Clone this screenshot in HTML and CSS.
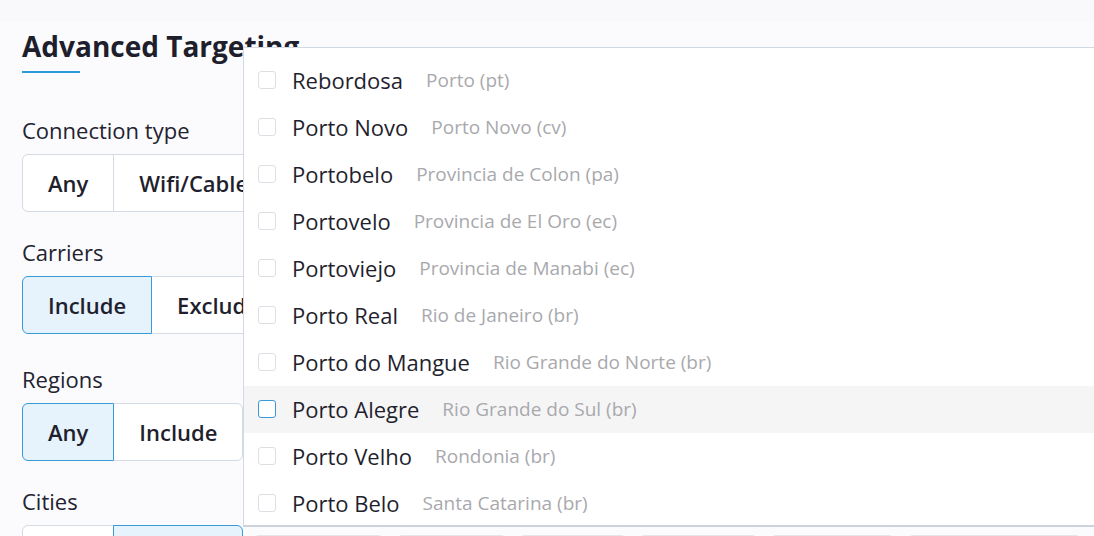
FILE: index.html
```html
<!DOCTYPE html>
<html lang="en">
<head>
<meta charset="utf-8">
<title>Advanced Targeting</title>
<link rel="stylesheet" href="styles.css">
</head>
<body>
<div class="topbar"></div>
<main class="panel">
  <h1 class="title">Advanced Targeting</h1>
  <div class="title-rule"></div>

  <section class="field">
    <div class="label">Connection type</div>
    <div class="seg">
      <button class="seg-btn">Any</button>
      <button class="seg-btn">Wifi/Cable</button>
      <button class="seg-btn">Cellular</button>
    </div>
  </section>

  <section class="field field-carriers">
    <div class="label">Carriers</div>
    <div class="seg">
      <button class="seg-btn is-active">Include</button>
      <button class="seg-btn">Exclude</button>
    </div>
  </section>

  <section class="field">
    <div class="label">Regions</div>
    <div class="seg">
      <button class="seg-btn is-active">Any</button>
      <button class="seg-btn">Include</button>
    </div>
  </section>

  <section class="field">
    <div class="label">Cities</div>
    <div class="row">
      <div class="seg">
        <button class="seg-btn">Any</button>
        <button class="seg-btn is-active">Include</button>
      </div>
      <div class="chips">
        <span class="chip c1"></span>
        <span class="chip c2"></span>
        <span class="chip c3"></span>
        <span class="chip c4"></span>
        <span class="chip c5"></span>
        <span class="chip c6"></span>
      </div>
    </div>
  </section>

  <div class="dropdown">
    <ul class="options">
      <li class="opt"><span class="box"></span><span class="name">Rebordosa</span><span class="region">Porto (pt)</span></li>
      <li class="opt"><span class="box"></span><span class="name">Porto Novo</span><span class="region">Porto Novo (cv)</span></li>
      <li class="opt"><span class="box"></span><span class="name">Portobelo</span><span class="region">Provincia de Colon (pa)</span></li>
      <li class="opt"><span class="box"></span><span class="name">Portovelo</span><span class="region">Provincia de El Oro (ec)</span></li>
      <li class="opt"><span class="box"></span><span class="name">Portoviejo</span><span class="region">Provincia de Manabi (ec)</span></li>
      <li class="opt"><span class="box"></span><span class="name">Porto Real</span><span class="region">Rio de Janeiro (br)</span></li>
      <li class="opt"><span class="box"></span><span class="name">Porto do Mangue</span><span class="region">Rio Grande do Norte (br)</span></li>
      <li class="opt is-hover"><span class="box"></span><span class="name">Porto Alegre</span><span class="region">Rio Grande do Sul (br)</span></li>
      <li class="opt"><span class="box"></span><span class="name">Porto Velho</span><span class="region">Rondonia (br)</span></li>
      <li class="opt"><span class="box"></span><span class="name">Porto Belo</span><span class="region">Santa Catarina (br)</span></li>
    </ul>
  </div>
</main>
</body>
</html>
```

FILE: styles.css
```css
* { box-sizing: border-box; }

html, body {
  margin: 0;
  padding: 0;
  height: 100%;
  overflow: hidden;
}

body {
  background: #fbfbfd;
  font-family: "Open Sans", "Noto Sans", sans-serif;
  color: #1f1f2e;
}

.topbar {
  height: 22px;
  background: #f9f9fb;
}

.panel {
  position: relative;
  padding-top: 5px;
  padding-left: 22px;
}

.title {
  margin: 0;
  font-size: 28px;
  line-height: 38px;
  font-weight: 700;
  color: #1e1e2d;
}

.title-rule {
  width: 58px;
  height: 2px;
  margin-top: 6px;
  background: #2b9bd8;
}

.field { margin-top: 25px; }
.title-rule + .field { margin-top: 42px; }
.field-carriers + .field { margin-top: 30px; }

.label {
  font-size: 22px;
  line-height: 30px;
  color: #222230;
  margin-bottom: 9px;
}

.row {
  display: flex;
  align-items: flex-start;
}

.seg {
  display: inline-flex;
  flex-shrink: 0;
}

.seg-btn {
  height: 58px;
  padding: 0 25px;
  margin: 0;
  border: 1px solid #d3dae3;
  background: #ffffff;
  font-family: inherit;
  font-size: 22px;
  font-weight: 600;
  color: #1f1f2e;
  white-space: nowrap;
}

.seg-btn + .seg-btn { margin-left: -1px; }
.seg-btn:first-child { border-radius: 6px 0 0 6px; }
.seg-btn:last-child { border-radius: 0 6px 6px 0; }

.seg-btn.is-active {
  position: relative;
  z-index: 1;
  background: #e6f2fc;
  border-color: #3a9ad9;
}

.chips {
  display: flex;
  gap: 12px;
  margin: 10px 0 0 10px;
}

.chip {
  height: 36px;
  border: 1px solid #e3e6ea;
  border-radius: 6px;
  background: #f8f9fb;
}
.c1 { width: 131px; }
.c2 { width: 111px; }
.c3 { width: 108px; }
.c4 { width: 119px; }
.c5 { width: 125px; }
.c6 { width: 175px; }

/* dropdown overlay */
.dropdown {
  position: absolute;
  left: 243px;
  top: 25px;
  width: 900px;
  height: 480px;
  background: #ffffff;
  border-top: 1px solid #d3d9e1;
  border-left: 1px solid #d3d9e1;
  border-bottom: 2px solid #cbd3dc;
  overflow: hidden;
  z-index: 5;
}

.options {
  list-style: none;
  margin: 0;
  padding: 8px 0 0;
}

.opt {
  display: flex;
  align-items: center;
  height: 47.1px;
  padding-left: 14px;
  white-space: nowrap;
}

.opt.is-hover { background: #f5f5f6; }

.box {
  width: 18px;
  height: 18px;
  border: 1px solid #dcdfe4;
  border-radius: 3px;
  background: #ffffff;
  flex-shrink: 0;
}

.opt.is-hover .box { border-color: #3a9ad9; }

.name {
  margin-left: 16px;
  font-size: 22px;
  color: #1f1f2e;
}

.region {
  margin-left: 23px;
  font-size: 19px;
  color: #a9a9ad;
}
```
